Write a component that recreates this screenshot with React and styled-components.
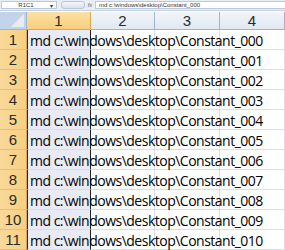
import React from "react";
import styled, { createGlobalStyle } from "styled-components";

const Global = createGlobalStyle`
  html, body { margin: 0; padding: 0; background: #ffffff; }
  body { width: 285px; height: 250px; overflow: hidden; font-family: "Liberation Sans", Arial, sans-serif; }
`;

const Sheet = styled.div`
  width: 285px;
  height: 250px;
  display: flex;
  flex-direction: column;
  background: #ffffff;
  overflow: hidden;
`;

const FormulaBar = styled.div`
  height: 10px;
  display: flex;
  align-items: center;
  background: #e9eef5;
  border-bottom: 1px solid #c5d2e3;
  font-size: 6px;
  color: #333;
`;

const NameBox = styled.div`
  width: 56px;
  height: 8px;
  margin-left: 1px;
  display: flex;
  align-items: center;
  justify-content: space-between;
  background: #fff;
  border: 1px solid #b9c9dc;
  box-sizing: border-box;
  padding: 0 3px 0 0;
  span:first-child { flex: 1; text-align: center; }
`;

const Pill = styled.div`
  width: 22px;
  height: 6px;
  margin-left: 4px;
  border-radius: 3px;
  background: linear-gradient(#f4f7fb, #d7e0ec);
  border: 1px solid #b7c6d9;
`;

const Fx = styled.div`
  width: 10px;
  text-align: center;
  font-style: italic;
  color: #666;
`;

const Formula = styled.div`
  flex: 1;
  height: 8px;
  display: flex;
  align-items: center;
  padding-left: 3px;
  background: #fff;
  border: 1px solid #b9c9dc;
  border-right: none;
  box-sizing: border-box;
`;

const Grid = styled.div`
  display: grid;
  grid-template-columns: 27px 64px 64px 65px 65px;
  grid-auto-rows: 20px;
  grid-template-rows: 18px;
  margin-top: 1px;
`;

const Corner = styled.div`
  background: #c2d4ea;
  border-right: 1px solid #9eb6ce;
  border-bottom: 1px solid #9eb6ce;
  position: relative;
  &::after {
    content: "";
    position: absolute;
    right: 2px;
    bottom: 2px;
    border-left: 13px solid transparent;
    border-bottom: 13px solid #e6edf6;
  }
`;

const ColHead = styled.div`
  display: flex;
  align-items: center;
  justify-content: center;
  font-size: 15px;
  color: #2b2b2b;
  background: ${(p) =>
    p.$active
      ? "linear-gradient(#fbe0a6, #f8cf7c)"
      : "linear-gradient(#f2f5fa, #e1e8f2)"};
  border-right: 1px solid ${(p) => (p.$active ? "#e0a64a" : "#9eb6ce")};
  border-bottom: 1px solid ${(p) => (p.$active ? "#e0a64a" : "#9eb6ce")};
`;

const RowHead = styled.div`
  display: flex;
  align-items: center;
  justify-content: center;
  font-size: 15px;
  color: #2b2b2b;
  background: linear-gradient(90deg, #f9d99a, #f7cf80);
  border-right: 1px solid #e0a64a;
  border-bottom: 1px solid #e8be7a;
`;

const Cell = styled.div`
  display: flex;
  align-items: center;
  white-space: nowrap;
  font-family: "Open Sans", "Liberation Sans", sans-serif;
  font-size: 14px;
  letter-spacing: -0.5px;
  color: #000;
  padding-left: 2px;
  background: ${(p) => (p.$selected ? "#e8ebf5" : "#fff")};
  border-bottom: 1px solid #d9dfe9;
  border-right: 1px solid ${(p) => (p.$selected ? "#222" : "#d9dfe9")};
  border-left: ${(p) => (p.$selected ? "1px solid #222" : "none")};
`;

const Text = styled.span`
  position: relative;
  z-index: 2;
  margin-top: 1px;
`;

const rows = Array.from({ length: 11 }, (_, i) => i);

export default function App() {
  return (
    <Sheet>
      <Global />
      <FormulaBar>
        <NameBox>
          <span>R1C1</span>
          <span>▾</span>
        </NameBox>
        <Pill />
        <Fx>fx</Fx>
        <Formula>md c:\windows\desktop\Constant_000</Formula>
      </FormulaBar>
      <Grid>
        <Corner />
        <ColHead $active>1</ColHead>
        <ColHead>2</ColHead>
        <ColHead>3</ColHead>
        <ColHead>4</ColHead>
        {rows.map((i) => (
          <React.Fragment key={i}>
            <RowHead>{i + 1}</RowHead>
            <Cell $selected>
              <Text>{`md c:\\windows\\desktop\\Constant_${String(i).padStart(3, "0")}`}</Text>
            </Cell>
            <Cell />
            <Cell />
            <Cell />
          </React.Fragment>
        ))}
      </Grid>
    </Sheet>
  );
}
